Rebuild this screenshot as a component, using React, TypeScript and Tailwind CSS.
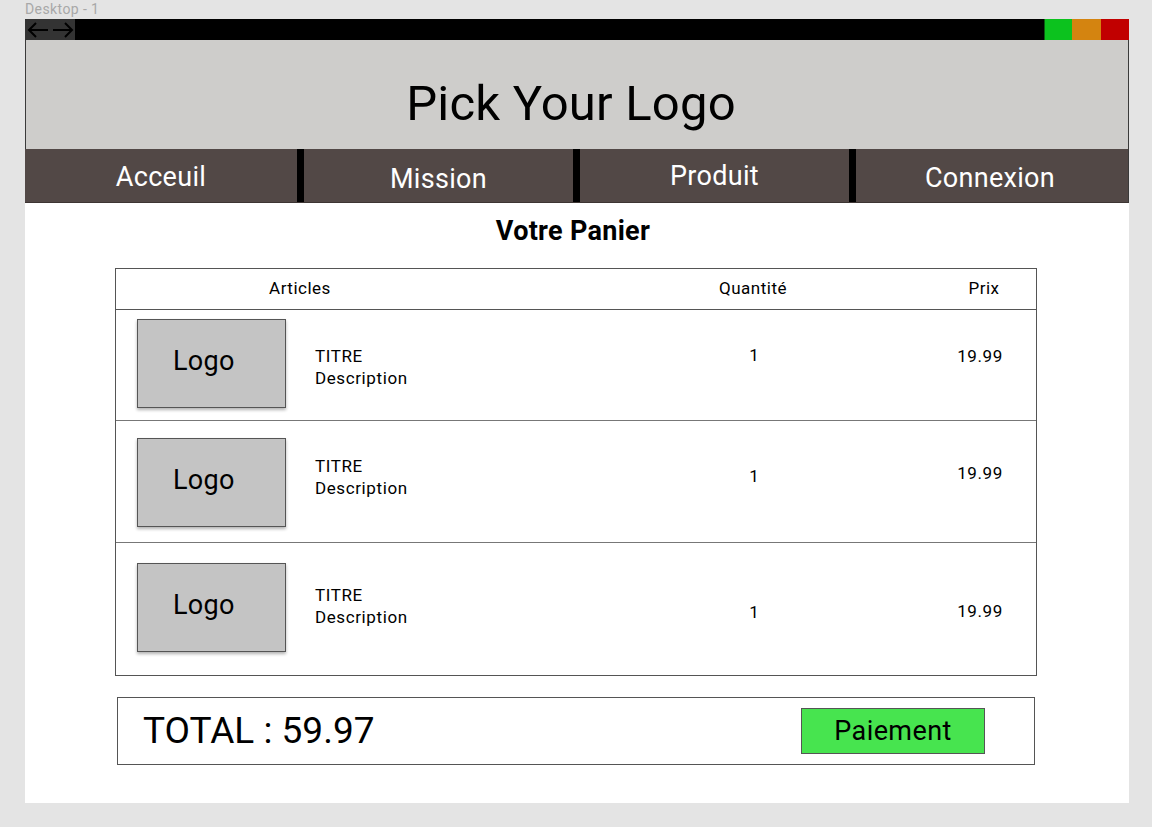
import React from "react";

const rows = [
  { h: "h-[111px]", logoTop: "pt-[9px]", titleTop: "pt-[35px]", qtyTop: "pt-[34px]", priceTop: "pt-[35px]" },
  { h: "h-[122px]", logoTop: "pt-[17px]", titleTop: "pt-[34px]", qtyTop: "pt-[44px]", priceTop: "pt-[41px]" },
  { h: "h-[132px]", logoTop: "pt-[20px]", titleTop: "pt-[41px]", qtyTop: "pt-[58px]", priceTop: "pt-[57px]" },
];

function Arrow({ dir }: { dir: "l" | "r" }) {
  return (
    <svg width="22" height="18" viewBox="0 0 22 18" fill="none" stroke="#000" strokeWidth="2">
      {dir === "l" ? (
        <>
          <path d="M21 9H2" />
          <path d="M9 2L2 9l7 7" />
        </>
      ) : (
        <>
          <path d="M1 9h19" />
          <path d="M13 2l7 7-7 7" />
        </>
      )}
    </svg>
  );
}

export default function App() {
  return (
    <div className="w-[1152px] h-[827px] bg-[#e4e4e4] overflow-hidden" style={{ fontFamily: "Roboto, 'Noto Sans', sans-serif" }}>
      <div className="h-[19px] pl-[25px] text-[14px] tracking-[0.4px] leading-[18px] text-[#a8a8a8]">Desktop - 1</div>
      <div className="ml-[25px] w-[1104px] h-[784px] bg-white">
        {/* top bar */}
        <div className="h-[21px] bg-black flex">
          <div className="w-[50px] h-full bg-[#333333] flex items-center justify-center gap-[3px]">
            <Arrow dir="l" />
            <Arrow dir="r" />
          </div>
          <div className="flex-1" />
          <div className="w-[28px] bg-[#0cc21e] border-l border-[#0a5d12]" />
          <div className="w-[29px] bg-[#d48410]" />
          <div className="w-[28px] bg-[#c10000]" />
        </div>
        {/* header */}
        <div className="h-[109px] bg-[#cecdcb] border-x border-[#3a3a3a] flex justify-center pt-[35px] pr-[12px]">
          <div className="text-[49px] tracking-[0.2px] leading-[58px] text-black">Pick Your Logo</div>
        </div>
        {/* nav */}
        <div className="h-[54px] bg-[#524846] border-r border-[#3a3a3a] border-b border-b-[#3d3533] flex text-white text-[27px] tracking-[0.3px]">
          <div className="w-[272px] flex justify-center pt-[11px] leading-[34px]">Acceuil</div>
          <div className="w-[7px] bg-black" />
          <div className="w-[269px] flex justify-center pt-[13px] leading-[34px]">Mission</div>
          <div className="w-[7px] bg-black" />
          <div className="w-[269px] flex justify-center pt-[10px] leading-[34px]">Produit</div>
          <div className="w-[7px] bg-black" />
          <div className="flex-1 flex justify-center pt-[12px] leading-[34px] pr-[4px]">Connexion</div>
        </div>
        {/* content */}
        <div className="pt-[12px] flex justify-center pr-[8px]">
          <div className="text-[27px] font-bold tracking-[0.3px] leading-[32px] text-black">Votre Panier</div>
        </div>
        <div className="ml-[90px] mt-[21px] w-[922px] border border-[#555] text-black">
          <div className="h-[41px] flex text-[17px] tracking-[0.5px] leading-[22px] pt-[8px] border-b border-[#555]">
            <div className="w-[368px] shrink-0 text-center">Articles</div>
            <div className="w-[169px] shrink-0" />
            <div className="w-[200px] shrink-0 text-center">Quantité</div>
            <div className="w-[81px] shrink-0" />
            <div className="w-[100px] shrink-0 text-center">Prix</div>
          </div>
          {rows.map((r, i) => (
            <div key={i} className={`${r.h} flex ${i < 2 ? "border-b border-[#777]" : ""}`}>
              <div className={`w-[200px] shrink-0 pl-[21px] ${r.logoTop}`}>
                <div className="w-[149px] h-[89px] bg-[#c4c4c4] border border-[#555] shadow-[0_2px_3px_rgba(0,0,0,0.3)] pl-[35px] pt-[24px] text-[27px] tracking-[0.3px] leading-[34px]">Logo</div>
              </div>
              <div className={`w-[338px] shrink-0 ${r.titleTop} text-[17px] tracking-[0.6px] leading-[22px]`}>
                <div className="-ml-[1px]">TITRE</div>
                <div className="-ml-[1px]">Description</div>
              </div>
              <div className={`w-[200px] shrink-0 text-center ${r.qtyTop} text-[17px] leading-[22px]`}>1</div>
              <div className="w-[74px] shrink-0" />
              <div className={`w-[104px] shrink-0 text-center ${r.priceTop} text-[17px] tracking-[0.6px] leading-[22px]`}>19.99</div>
            </div>
          ))}
        </div>
        <div className="ml-[92px] mt-[21px] w-[918px] h-[68px] border border-[#555] flex items-center text-black">
          <div className="pl-[25px] text-[37px] leading-[42px] w-[683px]">TOTAL : 59.97</div>
          <div className="w-[184px] h-[46px] bg-[#47e44f] border border-[#555] flex items-center justify-center text-[27px] tracking-[0.4px] leading-[30px]">Paiement</div>
        </div>
      </div>
    </div>
  );
}
